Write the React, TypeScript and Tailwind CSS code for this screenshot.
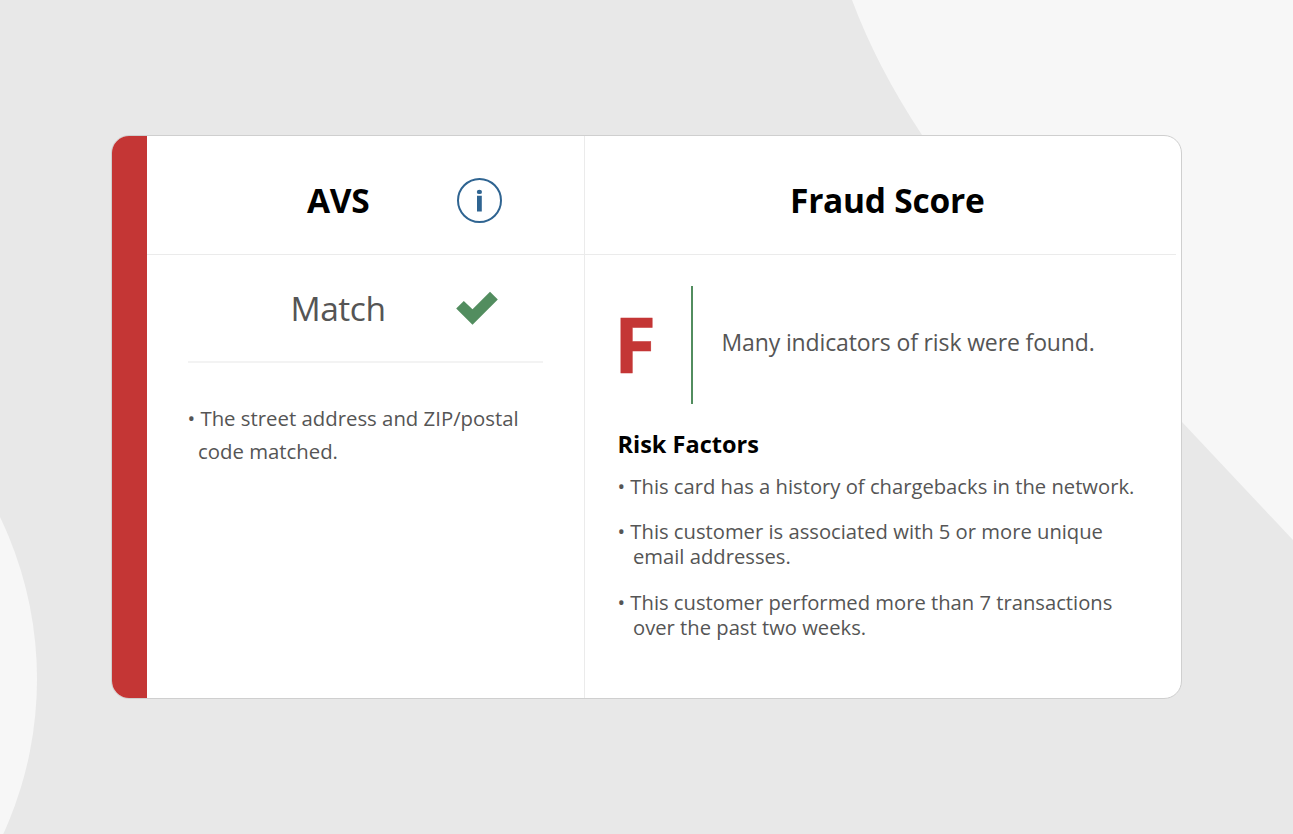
const riskFactors = [
  ["This card has a history of chargebacks in the network."],
  ["This customer is associated with 5 or more unique", "email addresses."],
  ["This customer performed more than 7 transactions", "over the past two weeks."],
];

function Backdrop() {
  return (
    <svg className="absolute inset-0" width="1293" height="834" viewBox="0 0 1293 834" fill="#f7f7f7">
      <path d="M852 0 Q877 67 922 135 C980 222 1090 322 1182 422 L1293 540 V0 Z" />
      <circle cx="-336" cy="679" r="373" />
    </svg>
  );
}

function InfoIcon() {
  return (
    <svg className="w-[46px] h-[46px]" viewBox="0 0 46 46" fill="none">
      <circle cx="23.5" cy="22.5" r="21.5" stroke="#2f6491" strokeWidth="2" />
      <ellipse cx="23.4" cy="13.9" rx="2.6" ry="2.2" fill="#2f6491" />
      <path d="M21 17.8h4.8v15.6H21z" fill="#2f6491" />
    </svg>
  );
}

function CheckIcon() {
  return (
    <svg className="w-[42px] h-[34px]" viewBox="0 0 42 34" fill="#528d5f">
      <path d="M0.2 17.4 7.8 9.9 16.5 18.3 34 0.8 41.8 8.4 16.5 33.8z" />
    </svg>
  );
}

export default function App() {
  return (
    <div className="relative w-[1293px] h-[834px] overflow-hidden bg-[#e8e8e8] pt-[135px] pl-[111px] font-['Open_Sans',sans-serif] text-[#555]">
      <Backdrop />

      <div className="relative flex w-[1071px] h-[564px] overflow-hidden rounded-[18px] border border-[#cfcfcf] bg-white">
        <div className="w-[35px] shrink-0 bg-[#c43635]" />

        {/* address check */}
        <section className="w-[438px] shrink-0 border-r border-[#ebebeb]">
          <header className="flex h-[119px] items-center border-b border-[#ebebeb] pt-[11px]">
            <h2 className="ml-[160px] w-[149px] pb-[2px] text-[33.5px] leading-[46px] font-bold tracking-[-0.3px] text-black">
              AVS
            </h2>
            <InfoIcon />
          </header>
          <div className="mx-[41px] flex h-[108px] w-[355px] items-center border-b-2 border-[#f3f3f3]">
            <p className="ml-[102.5px] w-[165.5px] text-[33.5px] leading-[46px] tracking-[-0.45px]">Match</p>
            <CheckIcon />
          </div>
          <p className="mt-[39px] ml-[40.5px] text-[20.35px] leading-[33px]">
            • The street address and ZIP/postal
            <span className="block pl-[10.5px]">code matched.</span>
          </p>
        </section>

        {/* fraud score */}
        <section className="flex-1">
          <header className="mr-[5px] flex h-[119px] items-center border-b border-[#ebebeb] pt-[11px]">
            <h2 className="ml-[205px] pb-[2px] text-[33.5px] leading-[46px] font-bold tracking-[-0.25px] text-black">
              Fraud Score
            </h2>
          </header>
          <div className="mt-[31px] flex h-[118px] items-center pl-[29px]">
            <span className="w-[77px] pb-[4px] text-[76.5px] leading-[114px] font-bold text-[#c43635] [-webkit-text-stroke:0.5px_#c43635]">
              F
            </span>
            <div className="h-full w-[2px] bg-[#528d5f]" />
            <p className="ml-[28.5px] pb-[6px] text-[23px] leading-[32px] tracking-[-0.13px] whitespace-nowrap">
              Many indicators of risk were found.
            </p>
          </div>
          <div className="mt-[24px] pl-[32.5px]">
            <h3 className="text-[23.5px] leading-[32px] font-bold text-black">Risk Factors</h3>
            <ul className="mt-[13.5px] space-y-[20px] text-[20.22px] leading-[25.4px] whitespace-nowrap">
              {riskFactors.map(([first, second]) => (
                <li key={first}>
                  • {first}
                  {second && <span className="block pl-[15.5px]">{second}</span>}
                </li>
              ))}
            </ul>
          </div>
        </section>
      </div>
    </div>
  );
}
